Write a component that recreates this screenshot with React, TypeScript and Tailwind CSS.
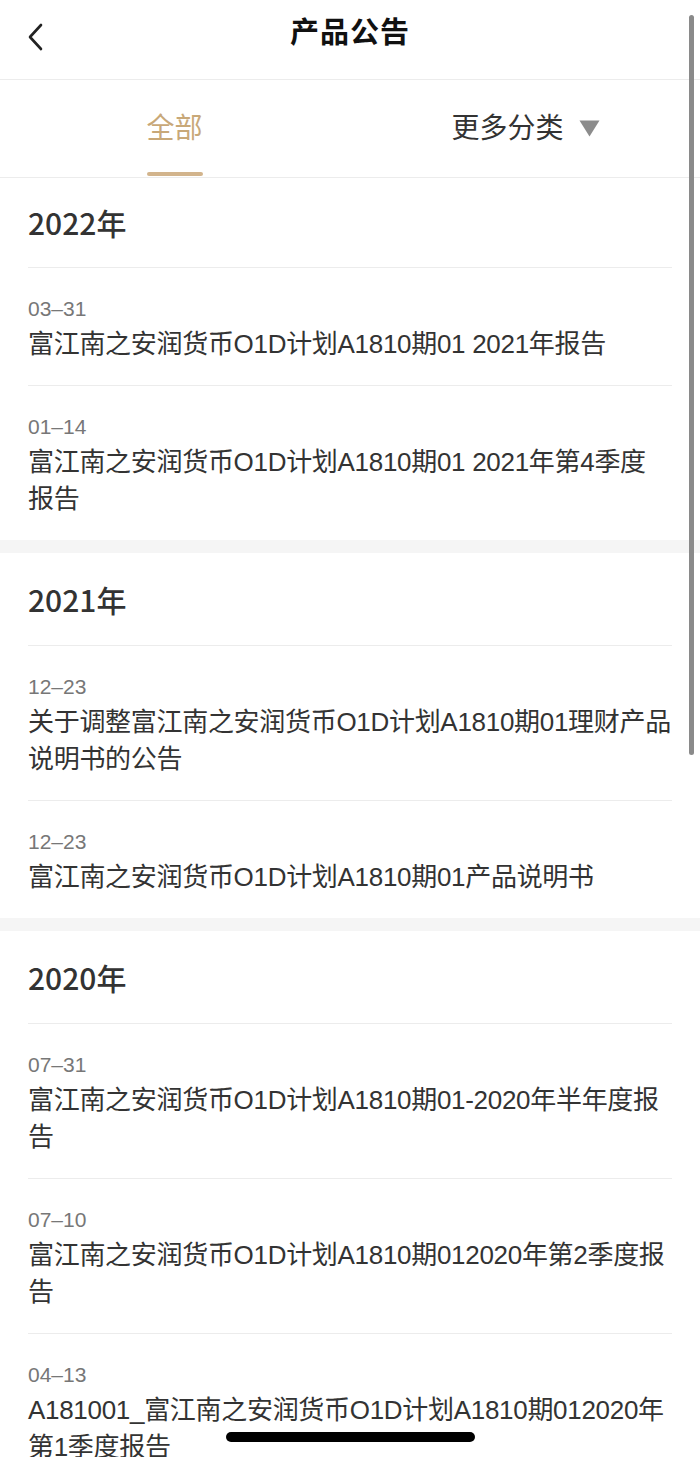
import React from "react";

type Notice = {
  date: string;
  lines: string[];
};

type YearGroup = {
  year: string;
  items: Notice[];
};

const groups: YearGroup[] = [
  {
    year: "2022年",
    items: [
      { date: "03–31", lines: ["富江南之安润货币O1D计划A1810期01 2021年报告"] },
      {
        date: "01–14",
        lines: ["富江南之安润货币O1D计划A1810期01 2021年第4季度", "报告"],
      },
    ],
  },
  {
    year: "2021年",
    items: [
      {
        date: "12–23",
        lines: ["关于调整富江南之安润货币O1D计划A1810期01理财产品", "说明书的公告"],
      },
      { date: "12–23", lines: ["富江南之安润货币O1D计划A1810期01产品说明书"] },
    ],
  },
  {
    year: "2020年",
    items: [
      {
        date: "07–31",
        lines: ["富江南之安润货币O1D计划A1810期01-2020年半年度报", "告"],
      },
      {
        date: "07–10",
        lines: ["富江南之安润货币O1D计划A1810期012020年第2季度报", "告"],
      },
      {
        date: "04–13",
        lines: ["A181001_富江南之安润货币O1D计划A1810期012020年", "第1季度报告"],
      },
    ],
  },
];

function NoticeRow({ notice, last }: { notice: Notice; last: boolean }) {
  return (
    <div className={last ? "pt-[29px] pb-[22px]" : "pt-[29px] pb-[22px] border-b border-[#ececec]"}>
      <div className="text-[21px] leading-[24px] text-[#777777]">{notice.date}</div>
      <div className="mt-[5px] text-[26px] leading-[37px] tracking-[-0.3px] text-[#333333]">
        {notice.lines.map((line, i) => (
          <div key={i} className="whitespace-nowrap">
            {line}
          </div>
        ))}
      </div>
    </div>
  );
}

export default function App() {
  return (
    <div
      className="relative w-[700px] h-[1457px] overflow-hidden bg-white"
      style={{ fontFamily: '"Liberation Sans", "Noto Sans CJK SC", sans-serif' }}
    >
      {/* 顶部导航 */}
      <div className="relative h-[80px] flex items-center justify-center border-b border-[#ececec]">
        <button className="absolute left-[22px] top-[19px] p-1">
          <svg width="18" height="28" viewBox="0 0 18 28" fill="none">
            <path d="M15 2 L4 14 L15 26" stroke="#222" strokeWidth="2.6" strokeLinecap="round" strokeLinejoin="round" />
          </svg>
        </button>
        <h1 className="text-[29px] font-bold text-[#111] tracking-[1px] -mt-[12px]">产品公告</h1>
      </div>

      {/* 分类 tab */}
      <div className="flex h-[98px] border-b border-[#ececec]">
        <div className="relative flex-1 flex items-center justify-center">
          <span className="text-[28px] text-[#c8a878]">全部</span>
          <span className="absolute bottom-[1px] left-1/2 -translate-x-1/2 w-[56px] h-[4px] rounded-sm bg-[#d2b48c]" />
        </div>
        <div className="flex-1 flex items-center justify-center gap-[15px] pl-[2px]">
          <span className="text-[28px] text-[#333333]">更多分类</span>
          <svg width="21" height="17" viewBox="0 0 21 17">
            <path d="M0.5 0.5 H20.5 L10.5 16.5 Z" fill="#8c8c8c" />
          </svg>
        </div>
      </div>

      {/* 列表 */}
      {groups.map((group, gi) => (
        <div key={group.year}>
          {gi > 0 && <div className="h-[13px] bg-[#f5f5f5]" />}
          <div className="px-[28px]">
            <div
              className={
                gi === 0
                  ? "h-[90px] flex items-center border-b border-[#ececec]"
                  : "h-[93px] flex items-center border-b border-[#ececec]"
              }
            >
              <span
                className="text-[30px] font-medium text-[#333333]"
                style={{ fontFamily: '"Noto Sans CJK SC", sans-serif' }}
              >
                {group.year}
              </span>
            </div>
            {group.items.map((item, i) => (
              <NoticeRow key={i} notice={item} last={i === group.items.length - 1} />
            ))}
          </div>
        </div>
      ))}

      {/* 滚动条 */}
      <div className="absolute right-[6px] top-[15px] w-[5px] h-[740px] rounded-full bg-[#8a8a8a]" />

      {/* Home indicator */}
      <div className="absolute left-[226px] top-[1432px] w-[249px] h-[10px] rounded-full bg-black" />
    </div>
  );
}
